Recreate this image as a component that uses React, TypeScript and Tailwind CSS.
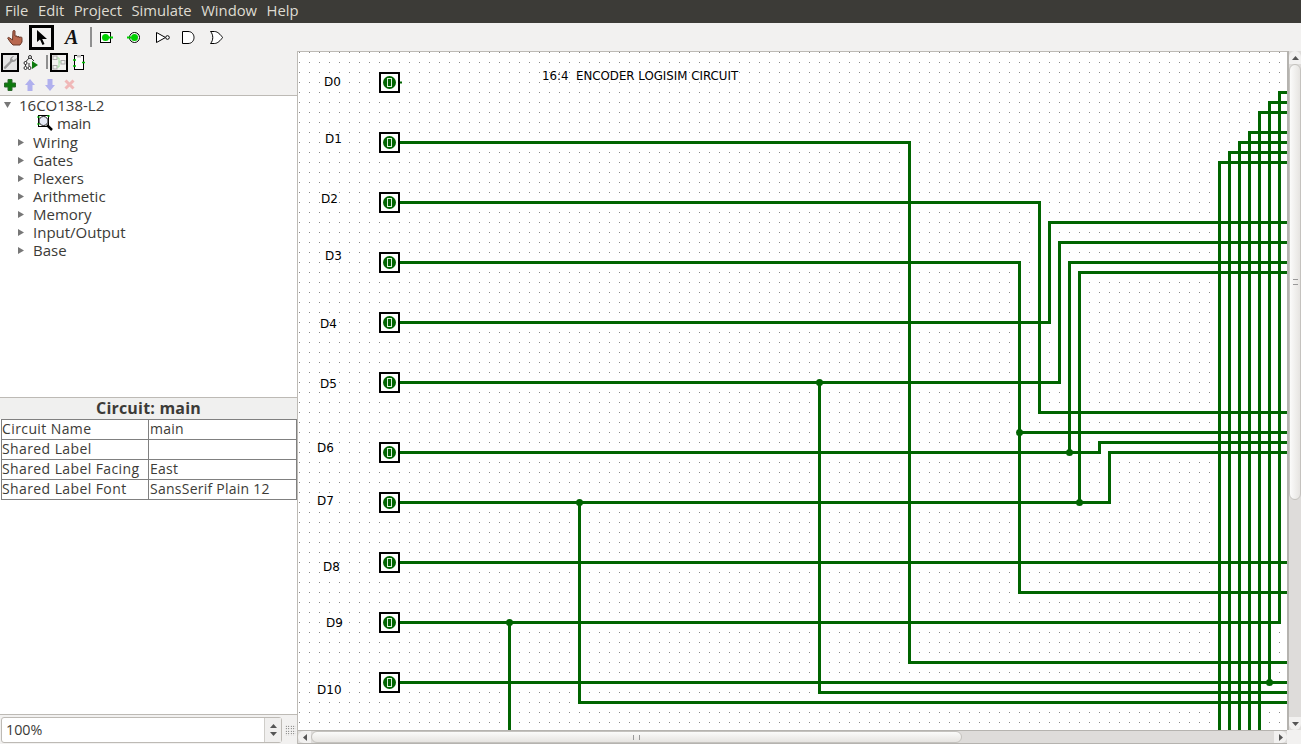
import React from "react";

const menus = ["File", "Edit", "Project", "Simulate", "Window", "Help"];
const libraries = ["Wiring", "Gates", "Plexers", "Arithmetic", "Memory", "Input/Output", "Base"];
const attributes = [
  ["Circuit Name", "main"],
  ["Shared Label", ""],
  ["Shared Label Facing", "East"],
  ["Shared Label Font", "SansSerif Plain 12"],
];

// pins: label text, label position, pin row
const pins = [
  { name: "D0", x: 324, y: 86, pin: 82 },
  { name: "D1", x: 325, y: 143, pin: 142 },
  { name: "D2", x: 321, y: 203, pin: 202 },
  { name: "D3", x: 325, y: 260, pin: 262 },
  { name: "D4", x: 320, y: 328, pin: 322 },
  { name: "D5", x: 320, y: 388, pin: 382 },
  { name: "D6", x: 317, y: 452, pin: 452 },
  { name: "D7", x: 317, y: 505, pin: 502 },
  { name: "D8", x: 323, y: 571, pin: 562 },
  { name: "D9", x: 326, y: 627, pin: 622 },
  { name: "D10", x: 317, y: 694, pin: 682 },
];

const wires = [
  "M399 142H909V662H1288",
  "M399 202H1039V412H1288",
  "M399 262H1019V592H1288",
  "M1019 432H1288",
  "M399 322H1049V222H1288",
  "M399 382H1059V242H1288",
  "M819 382V692H1288",
  "M399 452H1099V442H1288",
  "M1069 452V262H1288",
  "M399 502H1109V452H1288",
  "M1079 502V272H1288",
  "M579 502V702H1288",
  "M399 562H1288",
  "M399 622H1279V92H1288",
  "M509 622V731",
  "M399 682H1288",
  "M1219 731V162H1288",
  "M1229 731V152H1288",
  "M1239 731V142H1288",
  "M1249 731V132H1288",
  "M1259 731V112H1288",
  "M1269 682V102H1288",
];

const joints = [
  [819, 382],
  [1019, 432],
  [1069, 452],
  [1079, 502],
  [579, 502],
  [509, 622],
  [1269, 682],
];

const Toolbar = () => (
  <div className="flex h-[28px] items-center bg-[#f2f1f0] pl-[7px]">
    <svg width="16" height="16" viewBox="0 0 16 16" className="mt-[2px]">
      <path
        d="M6 1C6 .3 8 .3 8 1V6L10 6V7L12 6.500V7.500L14 7C15 7 15 8 15 9V12L13 15H6L4 13 .8 8.500C.5 7.500 1.500 7 2.500 7.800L5.500 10Z"
        fill="#b9684f"
        stroke="#6b3a2a"
      />
    </svg>
    <div className="ml-[6px] flex h-[25px] w-[25px] items-center justify-center border-[3px] border-black">
      <svg width="10" height="15" viewBox="0 0 10 15">
        <path d="M0 0V12L3 9.500 5.500 15 7.500 14 5.200 9H10Z" fill="#000" />
      </svg>
    </div>
    <span className="ml-[11px] w-[12px] font-['Liberation_Serif',serif] text-[20px] font-bold italic leading-none text-[#111]">
      A
    </span>
    <div className="ml-[13px] h-[20px] w-[2px] bg-[#8f8f8f]" />
    <svg width="13" height="11" viewBox="0 0 13 11" className="ml-[8px]">
      <rect x="0.500" y="0.500" width="10" height="10" fill="#fff" stroke="#000" />
      <circle cx="5.500" cy="5.500" r="3.500" fill="#00d000" />
      <path d="M8 5.500h5" stroke="#00d000" strokeWidth="2" />
    </svg>
    <svg width="13" height="11" viewBox="0 0 13 11" className="ml-[14px]">
      <circle cx="7.500" cy="5.500" r="5" fill="#fff" stroke="#000" />
      <circle cx="7.500" cy="5.500" r="3.500" fill="#00d000" />
      <path d="M0 5.500h4" stroke="#00d000" strokeWidth="2" />
    </svg>
    <svg width="14" height="11" viewBox="0 0 14 11" className="ml-[16px]">
      <path d="M.5.500v10L9.500 5.500z" fill="#fff" stroke="#000" />
      <circle cx="11.500" cy="5.500" r="1.800" fill="#fff" stroke="#000" />
    </svg>
    <svg width="13" height="13" viewBox="0 0 13 13" className="ml-[12px]">
      <path d="M.5.500H6c8 0 8 12 0 12H.5z" fill="#fff" stroke="#000" />
    </svg>
    <svg width="13" height="13" viewBox="0 0 13 13" className="ml-[15px]">
      <path d="M.5.500h4c3 0 6 3 8 6-2 3-5 6-8 6h-4c3-3 3-9 0-12z" fill="#fff" stroke="#000" />
    </svg>
  </div>
);

const ExplorerToolbar = () => (
  <div className="flex h-[21px] items-center pl-[1px] pt-[1px]">
    <div className="flex h-[19px] w-[18px] items-center justify-center border-[2px] border-black bg-[#e4e4e4]">
      <svg width="14" height="15" viewBox="0 0 14 15">
        <path d="M14 3c-.3 2.500-2.500 4.500-5 4L3 13.500c-1.200 1.200-3-.5-1.800-1.800L7 6C6.500 3.500 8.500 1 11 1L8.800 3.500 10.500 5.200z" fill="#9a9a9a" />
      </svg>
    </div>
    <svg width="15" height="15" viewBox="0 0 15 15" className="ml-[4px]">
      <g fill="#fff" stroke="#000" strokeWidth="0.800">
        <path d="M6 3L2.500 7M8 3l3 3M2.500 8v3M6 8v3" />
        <circle cx="7" cy="2" r="1.500" />
        <circle cx="2.500" cy="8" r="1.500" />
        <circle cx="2.500" cy="13" r="1.500" />
        <circle cx="6.500" cy="13" r="1.500" />
      </g>
      <path d="M9 6l6 4-6 4z" fill="#0c7a0c" />
    </svg>
    <div className="ml-[8px] h-[14px] w-[2px] bg-[#8f8f8f]" />
    <div className="ml-[2px] flex h-[19px] w-[18px] items-center justify-center border-[2px] border-black">
      <svg width="14" height="15" viewBox="0 0 14 15" fill="none">
        <rect x="1" y="1" width="4" height="3.500" stroke="#aaa" />
        <rect x="1" y="10.500" width="4" height="3.500" stroke="#aaa" />
        <rect x="9" y="5.500" width="4" height="3.500" stroke="#aaa" />
        <path d="M5 3h2v4h2M5 12h2V7" stroke="#a0dca0" />
      </svg>
    </div>
    <svg width="12" height="15" viewBox="0 0 12 15" className="ml-[5px]">
      <rect x="1.500" y="0.500" width="9" height="14" fill="#fff" stroke="#000" />
      <rect x="4" y="0" width="4" height="2.500" fill="#bbb" />
      <path d="M0 5h3M0 11h3M9 7.500h3" stroke="#00c000" strokeWidth="1.500" />
    </svg>
  </div>
);

const CircuitActions = () => (
  <div className="flex h-[23px] items-center pl-[4px] pt-[2px]">
    <svg width="12" height="12" viewBox="0 0 12 12">
      <path d="M4 .5h4v3.500h3.500v4H8v3.500H4V8H.5V4H4z" fill="#0c7a0c" stroke="#2c6a2c" />
    </svg>
    <svg width="10" height="12" viewBox="0 0 10 12" className="ml-[9px]">
      <path d="M5 0l5 6H7.500v6h-5V6H0z" fill="#b0b0ee" />
    </svg>
    <svg width="10" height="12" viewBox="0 0 10 12" className="ml-[10px]">
      <path d="M5 12l5-6H7.500V0h-5v6H0z" fill="#b0b0ee" />
    </svg>
    <svg width="11" height="11" viewBox="0 0 11 11" className="ml-[9px]">
      <path d="M1.500 1.500l8 8M9.500 1.500l-8 8" stroke="#f0b8b8" strokeWidth="3" />
    </svg>
  </div>
);

const Tree = () => (
  <div className="h-[303px] border-y border-[#bdbab5] bg-white text-[15px] leading-[18px] text-[#3c3b37]">
    <div className="flex h-[17px] items-center">
      <svg width="7" height="6" viewBox="0 0 7 6" className="ml-[4px] mr-[8px]">
        <path d="M0 0h7L3.500 6z" fill="#777" />
      </svg>
      16CO138-L2
    </div>
    <div className="flex h-[20px] items-center pl-[37px]">
      <svg width="16" height="16" viewBox="0 0 16 16" className="mr-[4px]">
        <rect x="1.500" y="0.500" width="10" height="11" fill="#fff" stroke="#000" />
        <circle cx="6.500" cy="6" r="4.500" fill="#e6eaf6" stroke="#222" />
        <path d="M0 2h3M0 9h3M10 1h3" stroke="#00c000" />
        <path d="M10 10l5 5" stroke="#000" strokeWidth="2.500" />
      </svg>
      <span className="tracking-[-0.3px]">main</span>
    </div>
    {libraries.map((name) => (
      <div key={name} className="flex h-[18px] items-center pl-[17px]">
        <svg width="8" height="10" viewBox="0 0 8 10" className="mr-[8px]">
          <path d="M1 2v7l6-3.500z" fill="#777" />
        </svg>
        {name}
      </div>
    ))}
  </div>
);

const AttributeTable = () => (
  <div className="flex-1 border-b border-[#bdbab5] bg-white">
    <div className="flex h-[21px] items-center justify-center bg-[#f0f0ef] pb-[2px] text-[16px] font-bold tracking-[0.2px] text-[#3c3b37]">
      Circuit: main
    </div>
    <div className="mx-[1px] w-[296px] border-l border-t border-[#808080]">
      {attributes.map(([label, value]) => (
        <div key={label} className="flex h-[20px] border-b border-r border-[#808080] text-[14px] leading-[17px] tracking-[0.25px] text-[#3c3b37]">
          <div className="w-[147px] border-r border-[#808080] tracking-[0.4px]">{label}</div>
          <div className="flex-1 whitespace-nowrap pl-[1px]">{value}</div>
        </div>
      ))}
    </div>
  </div>
);

const ZoomBox = () => (
  <div className="flex h-[29px] items-center bg-[#f2f1f0] pl-[1px] pt-[1px]">
    <div className="flex h-[26px] w-[281px] items-stretch rounded-[3px] border border-[#bdbab5] bg-white">
      <div className="flex flex-1 items-center pl-[4px] text-[14.300px] text-[#3c3b37]">100%</div>
      <div className="flex w-[17px] flex-col items-center justify-center gap-[4px] border-l border-[#cfcdc9] bg-[#f0efee]">
        <svg width="7" height="4" viewBox="0 0 7 4">
          <path d="M0 4l3.500-4L7 4z" fill="#555" />
        </svg>
        <svg width="7" height="4" viewBox="0 0 7 4">
          <path d="M0 0l3.500 4L7 0z" fill="#555" />
        </svg>
      </div>
    </div>
    <div className="ml-[3px] h-[11px] w-[11px] bg-[radial-gradient(circle,#333_0.7px,transparent_0.8px)] bg-size-[2.500px_2.500px]" />
  </div>
);

const CanvasDrawing = () => (
  <svg width="989" height="678" viewBox="298 52 989 678" className="block">
    <defs>
      <pattern id="grid" x="309" y="52" width="10" height="10" patternUnits="userSpaceOnUse">
        <rect x="0" y="0" width="1" height="1" fill="#8a8a8a" />
      </pattern>
    </defs>
    <rect x="298" y="52" width="989" height="678" fill="#fff" />
    <rect x="298" y="52" width="989" height="678" fill="url(#grid)" />
    <g fill="none" stroke="#006400" strokeWidth="3" transform="translate(0.5 0.5)">
      {wires.map((d) => (
        <path key={d} d={d} />
      ))}
    </g>
    <path d="M398 82.500h4" stroke="#006400" strokeWidth="2" />
    {joints.map(([cx, cy]) => (
      <circle key={`${cx}-${cy}`} cx={cx + 0.5} cy={cy + 0.5} r="3.500" fill="#006400" />
    ))}
    {pins.map((p) => (
      <g key={p.name}>
        <rect x="380" y={p.pin - 9} width="19" height="19" fill="#fff" stroke="#000" strokeWidth="2" />
        <circle cx="389.500" cy={p.pin + 0.5} r="6.500" fill="#006400" />
        <rect x="387.500" y={p.pin - 3.5} width="4" height="8" fill="none" stroke="#d8ecd8" strokeWidth="1" />
        <text x={p.x} y={p.y} fontFamily="'DejaVu Sans', sans-serif" fontSize="12" fill="#000">
          {p.name}
        </text>
      </g>
    ))}
    <text x="542" y="80" fontFamily="'DejaVu Sans', sans-serif" fontSize="11.800" fill="#000">
      {"16:4\u00a0\u00a0ENCODER LOGISIM CIRCUIT"}
    </text>
  </svg>
);

const VScrollbar = () => (
  <div className="flex w-[14px] flex-col border-l-2 border-[#b5b3af] bg-[#dedcda]">
    <div className="flex h-[13px] items-center justify-center rounded-t-[6px] bg-[#f2f1f0]">
      <svg width="7" height="4" viewBox="0 0 7 4">
        <path d="M0 4l3.500-4L7 4z" fill="#555" />
      </svg>
    </div>
    <div className="flex h-[436px] items-center justify-center rounded-[6px] border border-[#c4c2be] bg-linear-to-r from-[#fbfbfa] to-[#e6e4e1]">
      <div className="h-[6px] w-[5px] border-y border-[#999]" />
    </div>
    <div className="flex-1" />
    <div className="flex h-[13px] items-center justify-center rounded-b-[6px] bg-[#f2f1f0]">
      <svg width="7" height="4" viewBox="0 0 7 4">
        <path d="M0 0l3.500 4L7 0z" fill="#555" />
      </svg>
    </div>
  </div>
);

const HScrollbar = () => (
  <div className="flex h-[14px] items-stretch pr-[14px]">
    <div className="flex flex-1 items-stretch border-y border-[#b5b3af] bg-[#dedcda]">
      <div className="flex w-[13px] items-center justify-center rounded-l-[6px] bg-[#f2f1f0]">
        <svg width="4" height="7" viewBox="0 0 4 7">
          <path d="M4 0L0 3.500 4 7z" fill="#555" />
        </svg>
      </div>
      <div className="flex w-[651px] items-center justify-center rounded-[6px] border border-[#c4c2be] bg-linear-to-b from-[#fbfbfa] to-[#e6e4e1]">
        <div className="h-[5px] w-[7px] border-x border-[#999]" />
      </div>
      <div className="flex-1" />
      <div className="flex w-[13px] items-center justify-center rounded-r-[6px] bg-[#f2f1f0]">
        <svg width="4" height="7" viewBox="0 0 4 7">
          <path d="M0 0l4 3.500L0 7z" fill="#555" />
        </svg>
      </div>
    </div>
  </div>
);

const App = () => {
  return (
    <div className="flex h-[744px] w-[1301px] flex-col overflow-hidden bg-[#f2f1f0] font-['Open_Sans','Noto_Sans',sans-serif]">
      <div className="flex h-[23px] items-center gap-[9.500px] bg-[#3c3b37] pb-[2px] pl-[5px] text-[14.800px] text-[#dfdbd2]">
        {menus.map((m) => (
          <span key={m}>{m}</span>
        ))}
      </div>
      <Toolbar />
      <div className="flex flex-1">
        <div className="flex w-[298px] flex-col border-r border-[#bdbab5]">
          <ExplorerToolbar />
          <CircuitActions />
          <Tree />
          <AttributeTable />
          <ZoomBox />
        </div>
        <div className="flex flex-1 flex-col">
          <div className="flex flex-1">
            <div className="flex-1 border-t border-[#bdbab5]">
              <CanvasDrawing />
            </div>
            <VScrollbar />
          </div>
          <HScrollbar />
        </div>
      </div>
    </div>
  );
};

export default App;
